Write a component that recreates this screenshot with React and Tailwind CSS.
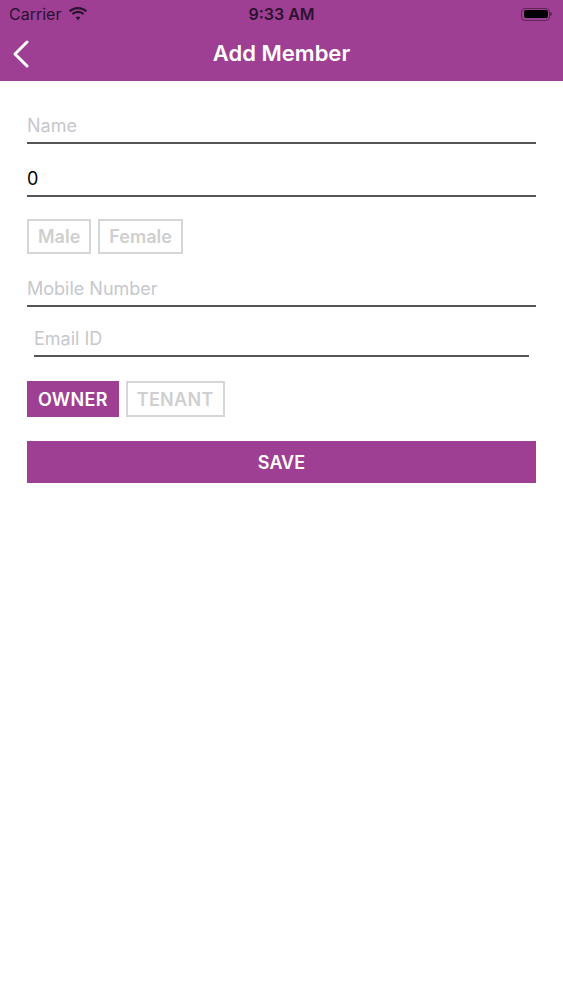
import { useState } from "react";

const Field = ({ placeholder, value, inset }) => (
  <div
    className={`flex items-end pb-[6px] border-b-2 border-[#555555] ${
      inset ? "mx-[7px] h-[50px]" : "h-[53px]"
    }`}
  >
    <span
      className={`text-[18px] leading-[20px] ${
        value ? "text-black" : "text-[#c7c7cd]"
      }`}
    >
      {value || placeholder}
    </span>
  </div>
);

const App = () => {
  const [gender, setGender] = useState("");
  const [role, setRole] = useState("owner");

  return (
    <div className="min-h-screen bg-white font-['Inter',sans-serif]">
      {/* Header */}
      <div className="bg-[#9e3f93] h-[81px] relative">
        <div className="h-[28px] flex items-center justify-between px-[9px] text-[#2b1230] text-[16px]">
          <div className="flex items-center gap-[7px]">
            <span>Carrier</span>
            <svg width="20" height="14" viewBox="0 0 20 14" fill="#2b1230">
              <path d="M10 2.2c2.9 0 5.6 1.1 7.6 3l1.5-1.6C16.7 1.3 13.5 0 10 0S3.3 1.3.9 3.6l1.5 1.6c2-1.9 4.7-3 7.6-3z" />
              <path d="M10 6c1.8 0 3.5.7 4.8 1.9l1.5-1.6C14.6 4.7 12.4 3.8 10 3.8S5.4 4.7 3.7 6.3l1.5 1.6C6.5 6.7 8.2 6 10 6z" />
              <path d="M10 9.6c.9 0 1.7.3 2.3.9L10 13.2 7.7 10.5c.6-.6 1.4-.9 2.3-.9z" />
            </svg>
          </div>
          <span className="absolute left-1/2 -translate-x-1/2 font-semibold">9:33 AM</span>
          <div className="flex items-center mr-[2px]">
            <div className="w-[29px] h-[13px] rounded-[4px] border border-[#5a2a55] p-[1.5px]">
              <div className="w-full h-full rounded-[2px] bg-black" />
            </div>
            <div className="w-[2px] h-[4px] bg-[#5a2a55] rounded-r-sm" />
          </div>
        </div>
        <div className="h-[53px] flex items-center justify-center relative">
          <svg
            className="absolute left-[12px] top-[12px]"
            width="18"
            height="28"
            viewBox="0 0 18 28"
            fill="none"
            stroke="white"
            strokeWidth="3"
            strokeLinecap="round"
            strokeLinejoin="round"
          >
            <path d="M15 2 L3 14 L15 26" />
          </svg>
          <span className="text-white text-[22px] font-semibold -mt-[2px]">Add Member</span>
        </div>
      </div>

      {/* Form */}
      <div className="px-[27px] pt-[10px] flex flex-col">
        <Field placeholder="Name" />
        <Field placeholder="Age" value="0" />

        <div className="flex gap-[7px] mt-[22px]">
          {["Male", "Female"].map((g) => (
            <button
              key={g}
              onClick={() => setGender(g)}
              className={`h-[35px] px-[9px] border-2 text-[18px] font-semibold ${
                gender === g
                  ? "bg-[#9e3f93] border-[#9e3f93] text-white"
                  : "border-[#d6d6d6] text-[#cfcfcf]"
              }`}
            >
              {g}
            </button>
          ))}
        </div>

        <Field placeholder="Mobile Number" />
        <Field placeholder="Email ID" inset />

        <div className="flex gap-[7px] mt-[24px]">
          {["OWNER", "TENANT"].map((r) => (
            <button
              key={r}
              onClick={() => setRole(r.toLowerCase())}
              className={`h-[36px] px-[9px] border-2 text-[18px] font-semibold tracking-[0.3px] ${
                role === r.toLowerCase()
                  ? "bg-[#9e3f93] border-[#9e3f93] text-white"
                  : "border-[#d6d6d6] text-[#cfcfcf]"
              }`}
            >
              {r}
            </button>
          ))}
        </div>

        <button className="mt-[24px] h-[42px] bg-[#9e3f93] text-white text-[18px] font-semibold">
          SAVE
        </button>
      </div>
    </div>
  );
};

export default App;
